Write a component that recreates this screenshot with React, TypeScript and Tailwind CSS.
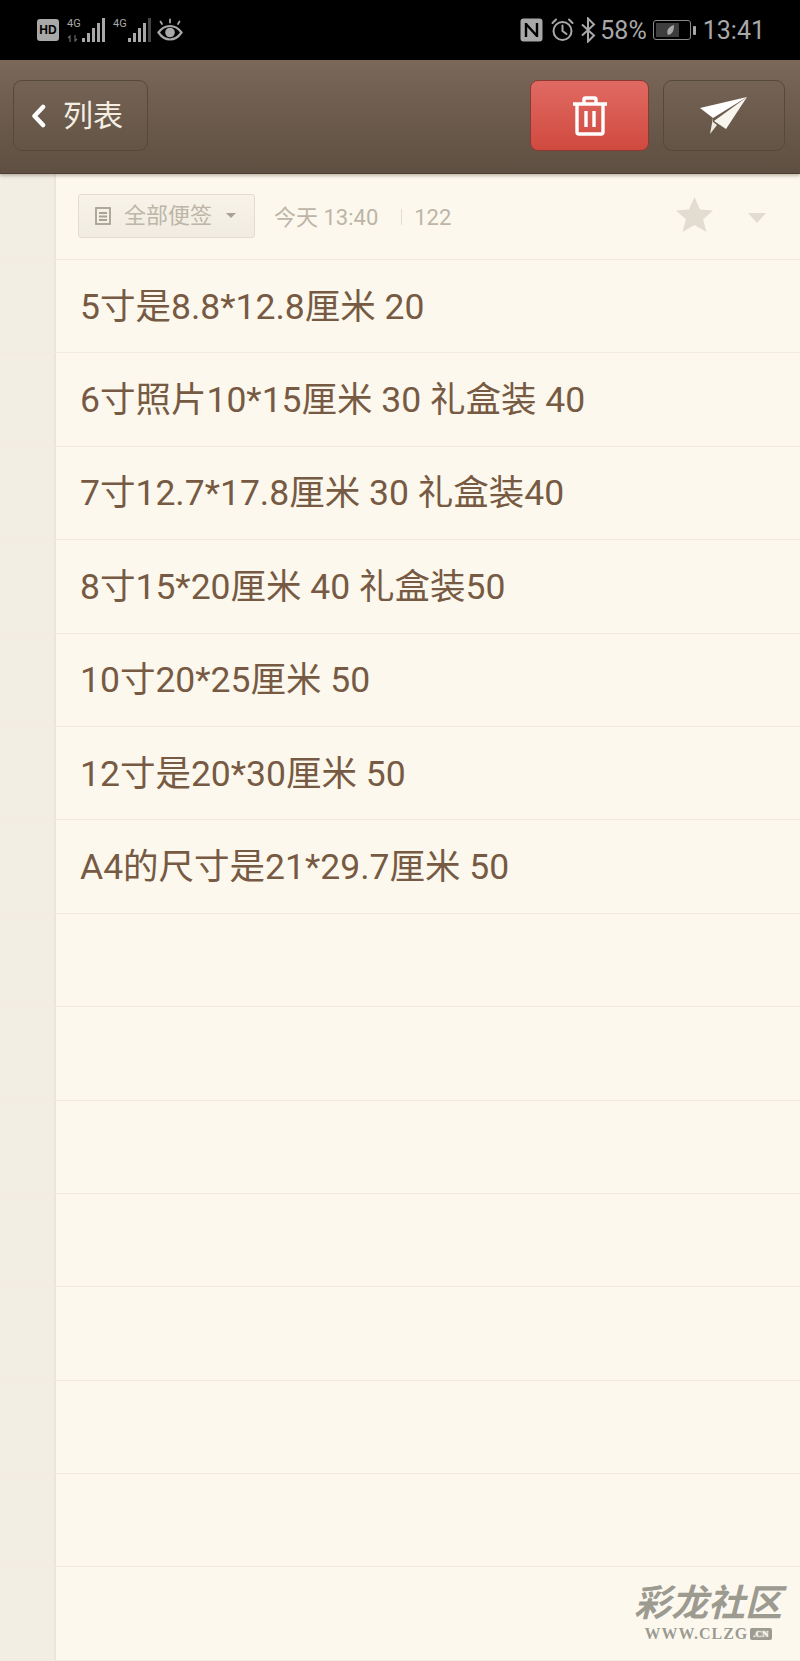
const rows = [
  "5寸是8.8*12.8厘米 20",
  "6寸照片10*15厘米 30 礼盒装 40",
  "7寸12.7*17.8厘米 30 礼盒装40",
  "8寸15*20厘米 40 礼盒装50",
  "10寸20*25厘米 50",
  "12寸是20*30厘米 50",
  "A4的尺寸是21*29.7厘米 50",
  "", "", "", "", "", "", "", "",
];

const font = "font-['Roboto','Noto_Sans_CJK_SC',sans-serif]";

function Signal({ bars }: { bars: number }) {
  const heights = [4, 9, 14, 19, 24];
  return (
    <div className="flex items-end gap-[2px]">
      {heights.map((h, i) => (
        <div
          key={i}
          className={i < bars ? "w-[3px] bg-[#a8a8a8]" : "w-[3px] bg-[#444444]"}
          style={{ height: h }}
        />
      ))}
    </div>
  );
}

function StatusBar() {
  return (
    <div className={`flex h-[60px] items-center justify-between bg-black pl-[37px] pr-[35px] text-[#a8a8a8] ${font}`}>
      <div className="flex items-center">
        <div className="flex h-[22px] w-[22px] items-center justify-center rounded-[3px] bg-[#a8a8a8] font-['Liberation_Sans',sans-serif] text-[12px] font-bold text-black">
          HD
        </div>
        <div className="ml-[8px] flex h-[24px] w-[14px] flex-col justify-between">
          <span className="text-[11px] leading-[11px]">4G</span>
          <svg width="12" height="7" viewBox="0 0 12 7" fill="none" stroke="#666666" strokeWidth="1.200">
            <path d="M3 7V1L1 3M8 0v6l2-2" />
          </svg>
        </div>
        <div className="ml-[1px]">
          <Signal bars={5} />
        </div>
        <div className="ml-[8px] flex h-[24px] w-[14px] items-start">
          <span className="text-[11px] leading-[11px]">4G</span>
        </div>
        <div className="ml-[1px]">
          <Signal bars={4} />
        </div>
        <svg className="ml-[6px]" width="26" height="24" viewBox="0 0 26 24" fill="none" stroke="#a8a8a8">
          <path d="M1.500 14.500C5 9.500 9 8 13 8s8 1.500 11.500 6.500C21 19.500 17 21.500 13 21.500S5 19.500 1.500 14.500Z" strokeWidth="2.200" />
          <circle cx="13" cy="14.500" r="4.800" fill="#a8a8a8" stroke="none" />
          <path d="M5 6 3.500 3.500M13 4.500V1.500M21 6l1.500-2.500" strokeWidth="1.800" strokeLinecap="round" />
        </svg>
      </div>
      <div className="flex items-center">
        <svg width="23" height="24" viewBox="0 0 23 24" fill="none">
          <rect x="0.500" y="0.500" width="22" height="23" rx="3" fill="#a8a8a8" />
          <path d="M6 5v14M17 5v14M6 6l11 12" stroke="#000" strokeWidth="2.400" />
        </svg>
        <svg className="ml-[8px]" width="23" height="24" viewBox="0 0 23 24" fill="none" stroke="#a8a8a8" strokeWidth="2" strokeLinecap="round">
          <circle cx="11.500" cy="13" r="9" />
          <path d="M11.500 7.500V13l4 3M1.500 5 5 1.500M21.500 5 18 1.500" />
        </svg>
        <svg className="ml-[6px]" width="17" height="26" viewBox="0 0 15 26" fill="none" stroke="#a8a8a8" strokeWidth="2">
          <path d="M1 7.500 13 18.500 7 24.500V1.500l6 6L1 18.500" />
        </svg>
        <span className="ml-[3px] text-[25px] leading-none">58%</span>
        <svg className="ml-[6px]" width="44" height="22" viewBox="0 0 44 22" fill="none">
          <rect x="0.500" y="1.500" width="37" height="19" rx="2.500" stroke="#8a8a8a" />
          <rect x="3" y="4" width="23" height="14" fill="#3d3d3d" />
          <path d="M15 16c-2-4 0-8 6-10 0 5-1 9-6 10Z" fill="#a8a8a8" />
          <rect x="40" y="7" width="3" height="9" rx="1" fill="#a8a8a8" />
        </svg>
        <span className="ml-[6px] text-[25px] leading-none">13:41</span>
      </div>
    </div>
  );
}

function Header() {
  return (
    <div className="relative z-10 flex h-[114px] items-center justify-between border-b border-b-[#4b3e33] bg-gradient-to-b from-[#7a6859] to-[#5e4f42] pl-[13px] pr-[15px] pb-[2px] shadow-[0_2px_3px_rgba(90,70,50,0.35)]">
      <button className={`flex h-[71px] w-[135px] items-center rounded-[9px] border border-[#55483c] pl-[17px] text-[30px] leading-none text-[#f3ede2] ${font}`}>
        <svg width="16" height="24" viewBox="0 0 16 24" fill="none" stroke="#fff" strokeWidth="4.500" strokeLinecap="round" strokeLinejoin="round">
          <path d="M12 3 3.500 12l8.500 9" />
        </svg>
        <span className="ml-[16px]">列表</span>
      </button>
      <div className="flex gap-[14px]">
        <button className="flex h-[71px] w-[119px] items-center justify-center rounded-[8px] border border-[#8a3a32] bg-gradient-to-b from-[#e06a62] to-[#d0493f]">
          <svg width="36" height="40" viewBox="0 0 36 40" fill="none" stroke="#fff" strokeWidth="3.400">
            <path d="M1 8h34M12 8V3.500c0-1 .6-1.500 1.500-1.500h9c.9 0 1.500.5 1.500 1.500V8" />
            <path d="M5 8v28c0 1.500 1 2 2 2h22c1 0 2-.5 2-2V8" />
            <path d="M14 15v16M22 15v16" />
          </svg>
        </button>
        <button className="flex h-[71px] w-[122px] items-center justify-center rounded-[9px] border border-[#55483c]">
          <svg width="48" height="38" viewBox="0 0 48 38" fill="none">
            <path d="M0 11 47 0 13 21Z" fill="#fff" />
            <path d="M47 0 26 32 14 24Z" fill="#f8f5ee" />
            <path d="M13 21l-3 16 7-9 -4-3Z" fill="#f0ebe2" />
          </svg>
        </button>
      </div>
    </div>
  );
}

function NoteMeta() {
  return (
    <div className="flex h-[86px] border-b border-b-[#f2ece0]">
      <div className="w-[56px] shrink-0 border-r-2 border-r-[#ebe6da] bg-[#f2eee4]" />
      <div className={`flex flex-1 items-center pl-[22px] pr-[33px] ${font}`}>
        <div className="mb-[2px] flex h-[44px] w-[177px] items-center rounded-[3px] border border-[#e3ddd0] bg-gradient-to-b from-[#f7f3e9] to-[#f1ece1] pl-[16px] text-[22px] text-[#bdb5a7]">
          <svg width="16" height="18" viewBox="0 0 16 18" fill="none" stroke="#a9a193" strokeWidth="1.800">
            <rect x="1" y="1" width="14" height="16" />
            <path d="M4 6h8M4 9.500h8M4 13h8" />
          </svg>
          <span className="ml-[13px]">全部便签</span>
          <div className="ml-[14px] h-0 w-0 border-x-[5px] border-t-[5px] border-x-transparent border-t-[#a9a193]" />
        </div>
        <span className="ml-[19px] mt-[1px] text-[22px] text-[#bdb5a7]">今天 13:40</span>
        <div className="ml-[23px] mt-[1px] h-[16px] w-[1px] bg-[#e3ddd0]" />
        <span className="ml-[12px] mt-[1px] text-[22px] text-[#bdb5a7]">122</span>
        <div className="ml-auto flex items-center">
          <svg className="mb-[4px]" width="37" height="35" viewBox="0 0 37 35" fill="#e3ddd1">
            <path d="M18.500 0 24 12.500 37 13.500 27 22.500 30.500 35 18.500 28 6.500 35 10 22.500 0 13.500 13 12.500Z" />
          </svg>
          <div className="ml-[35px] mr-[1px] mt-[3px] h-0 w-0 border-x-[9px] border-t-[10px] border-x-transparent border-t-[#e3ddd1]" />
        </div>
      </div>
    </div>
  );
}

export default function App() {
  return (
    <div className="relative h-[1661px] w-[800px] overflow-hidden bg-[#fcf8ed]">
      <StatusBar />
      <Header />
      <NoteMeta />
      {rows.map((text, i) => (
        <div key={i} className="flex h-[93.400px] border-b border-b-[#f2ece0]">
          <div className="w-[56px] shrink-0 border-r-2 border-r-[#ebe6da] bg-[#f2eee4]" />
          <div className={`flex flex-1 items-center pl-[24px] pt-[2px] text-[35.500px] text-[#775a43] ${font}`}>{text}</div>
        </div>
      ))}
      <div className="absolute bottom-[18px] right-[18px] flex flex-col items-center text-[#9d9a90] [text-shadow:0_0_2px_#fff]">
        <span className="font-['Noto_Sans_CJK_SC',serif] text-[37px] leading-[50px] font-bold italic">彩龙社区</span>
        <div className="flex items-center font-['Liberation_Serif',serif] text-[16px] leading-[18px] font-bold tracking-[1px]">
          <span>WWW.CLZG</span>
          <span className="ml-[2px] rounded-[2px] bg-[#9d9a90] px-[3px] text-[9px] leading-[12px] tracking-normal text-[#fcf8ed]">.CN</span>
        </div>
      </div>
    </div>
  );
}
